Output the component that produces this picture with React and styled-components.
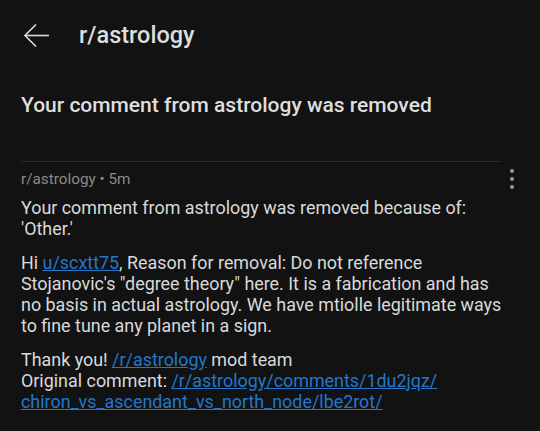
import React from "react";
import styled, { createGlobalStyle } from "styled-components";

const Global = createGlobalStyle`
  html, body { margin: 0; padding: 0; background: #121212; }
  body { font-family: Roboto, "Noto Sans", sans-serif; color: #d9dadb; }
`;

const Page = styled.div`
  width: 540px;
  height: 431px;
  background: #121212;
  overflow: hidden;
`;

const TopBar = styled.header`
  display: flex;
  align-items: center;
  height: 70px;
  padding-left: 22px;
  gap: 28px;
`;

const BackButton = styled.button`
  background: none;
  border: 0;
  padding: 0;
  width: 29px;
  height: 29px;
  display: flex;
  align-items: center;
  justify-content: center;
  color: #dcdcdc;
`;

const Title = styled.h1`
  margin: 0;
  font-size: 23.5px;
  font-weight: 500;
  color: #dedede;
`;

const Heading = styled.h2`
  margin: 0;
  padding: 24px 21px 0;
  font-size: 21px;
  font-weight: 500;
  color: #dedede;
  height: 67px;
  line-height: 22px;
`;

const Divider = styled.hr`
  margin: 0 38px 0 21px;
  border: 0;
  border-top: 1px solid #282828;
`;

const Card = styled.section`
  padding: 5px 29px 0 21px;
`;

const MetaRow = styled.div`
  display: flex;
  align-items: center;
  justify-content: space-between;
  height: 23px;
`;

const Meta = styled.span`
  font-size: 15.3px;
  color: #8b8b8b;
`;

const Kebab = styled.div`
  display: flex;
  flex-direction: column;
  gap: 4px;
  margin-right: -3px;
  margin-top: 1px;
`;

const Dot = styled.span`
  width: 4px;
  height: 4px;
  border-radius: 50%;
  background: #9a9a9a;
`;

const Body = styled.div`
  font-size: 17.9px;
  line-height: 21px;
  color: #d9dadb;
  padding-top: 7px;
`;

const Para = styled.p`
  margin: 0 0 13px;
`;

const Link = styled.a`
  color: #2277cc;
  text-decoration: underline;
`;

export default function App() {
  return (
    <Page>
      <Global />
      <TopBar>
        <BackButton aria-label="Back">
          <svg width="27" height="25" viewBox="0 0 27 25" fill="none" stroke="#dcdcdc" strokeWidth="1.6">
            <path d="M26 12.5H2" />
            <path d="M13 1.5L2 12.5L13 23.5" />
          </svg>
        </BackButton>
        <Title>r/astrology</Title>
      </TopBar>
      <Heading>Your comment from astrology was removed</Heading>
      <Divider />
      <Card>
        <MetaRow>
          <Meta>r/astrology • 5m</Meta>
          <Kebab>
            <Dot />
            <Dot />
            <Dot />
          </Kebab>
        </MetaRow>
        <Body>
          <Para>Your comment from astrology was removed because of: 'Other.'</Para>
          <Para>
            Hi <Link>u/scxtt75</Link>, Reason for removal: Do not reference Stojanovic's "degree theory" here. It is a fabrication and has no basis in actual astrology. We have mtiolle legitimate ways to fine tune any planet in a sign.
          </Para>
          <Para>
            Thank you! <Link>/r/astrology</Link> mod team
            <br />
            Original comment: <Link>/r/astrology/comments/1du2jqz/ chiron_vs_ascendant_vs_north_node/lbe2rot/</Link>
          </Para>
        </Body>
      </Card>
    </Page>
  );
}
